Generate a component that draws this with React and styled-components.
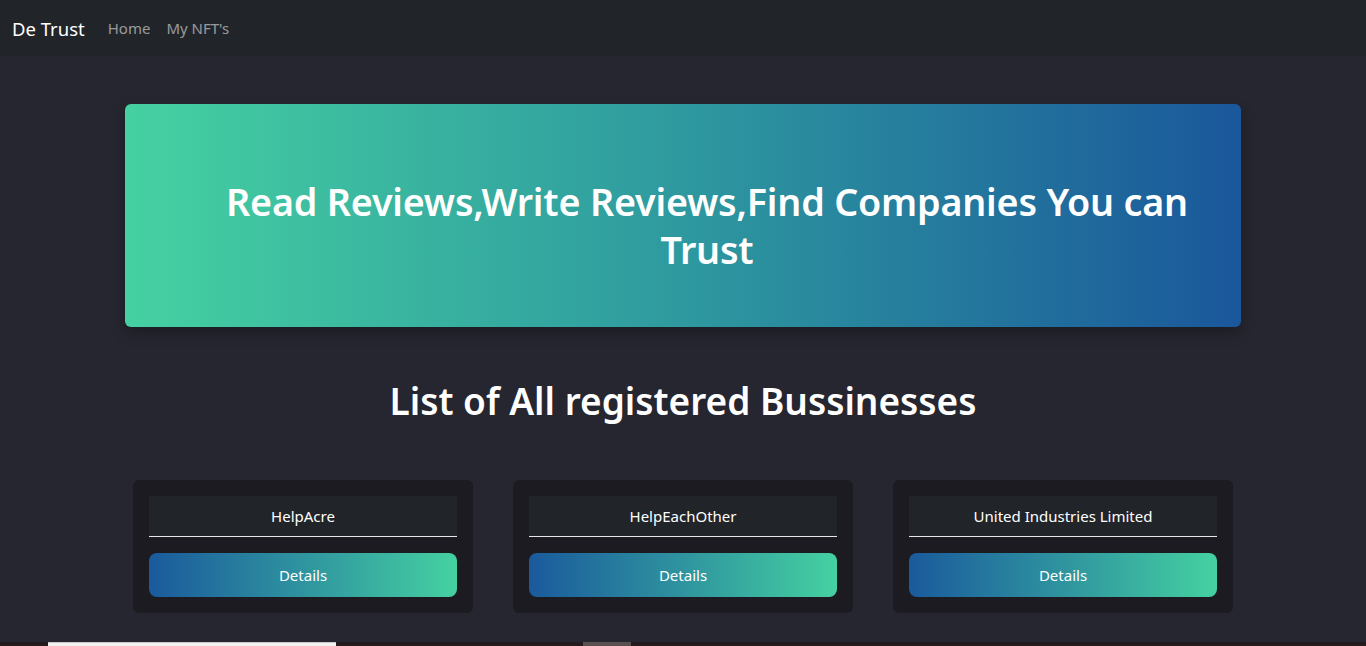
import React from 'react';
import styled, { createGlobalStyle } from 'styled-components';

const GlobalStyle = createGlobalStyle`
  * {
    box-sizing: border-box;
  }
  body {
    margin: 0;
    background: #25262f;
    font-family: "Noto Sans", "Open Sans", sans-serif;
    color: #fff;
  }
`;

const Navbar = styled.nav`
  height: 56px;
  background: #212529;
  display: flex;
  align-items: center;
  padding: 0 12px;
`;

const Brand = styled.a`
  font-size: 18.5px;
  color: #fff;
  margin-right: 15px;
  text-decoration: none;
`;

const NavLink = styled.a`
  font-size: 15px;
  color: rgba(255, 255, 255, 0.55);
  padding: 0 8px;
  text-decoration: none;
`;

const Container = styled.main`
  width: 1140px;
  margin: 0 auto;
  padding: 0 12px;
`;

const Hero = styled.section`
  margin-top: 48px;
  height: 223px;
  border-radius: 6px;
  background: linear-gradient(90deg, #45d1a1 0%, #2e999f 50%, #1a579b 100%);
  box-shadow: 0 6px 14px rgba(0, 0, 0, 0.25);
  display: flex;
  align-items: center;
  justify-content: center;
  padding: 20px 48px 0 96px;
`;

const HeroTitle = styled.h1`
  margin: 0;
  font-size: 37.7px;
  font-weight: 600;
  line-height: 48px;
  text-align: center;
  letter-spacing: -0.2px;
`;

const SectionTitle = styled.h2`
  margin: 50px 0 0;
  font-size: 37px;
  font-weight: 600;
  line-height: 48px;
  text-align: center;
`;

const CardGrid = styled.div`
  margin-top: 55px;
  display: grid;
  grid-template-columns: repeat(3, 340px);
  justify-content: center;
  gap: 40px;
`;

const Card = styled.div`
  background: #1c1b21;
  border-radius: 6px;
  padding: 16px;
  display: flex;
  flex-direction: column;
  gap: 16px;
`;

const CardName = styled.div`
  height: 41px;
  background: #212529;
  border-bottom: 1px solid #e6e6e6;
  display: flex;
  align-items: center;
  justify-content: center;
  font-size: 15px;
`;

const DetailsButton = styled.button`
  height: 44px;
  border: none;
  border-radius: 8px;
  background: linear-gradient(90deg, #1a5a9c 0%, #2f949f 50%, #45d1a1 100%);
  color: #fff;
  font-family: inherit;
  font-size: 15px;
  cursor: pointer;
`;

const BottomStrip = styled.div`
  margin-top: 29px;
  height: 20px;
  background: #221a1d;
  display: flex;
`;

const StripBlock = styled.div`
  width: ${p => p.w}px;
  margin-left: ${p => p.ml}px;
  background: ${p => p.bg};
  border-top: ${p => (p.light ? '1px solid #c8c8c8' : 'none')};
`;

const businesses = ['HelpAcre', 'HelpEachOther', 'United Industries Limited'];

export default function App() {
  return (
    <>
      <GlobalStyle />
      <Navbar>
        <Brand href="#">De Trust</Brand>
        <NavLink href="#">Home</NavLink>
        <NavLink href="#">My NFT's</NavLink>
      </Navbar>
      <Container>
        <Hero>
          <HeroTitle>Read Reviews,Write Reviews,Find Companies You can Trust</HeroTitle>
        </Hero>
        <SectionTitle>List of All registered Bussinesses</SectionTitle>
        <CardGrid>
          {businesses.map(name => (
            <Card key={name}>
              <CardName>{name}</CardName>
              <DetailsButton>Details</DetailsButton>
            </Card>
          ))}
        </CardGrid>
      </Container>
      <BottomStrip>
        <StripBlock w={288} ml={48} bg="#f2f2f2" light />
        <StripBlock w={48} ml={247} bg="#5a5050" />
      </BottomStrip>
    </>
  );
}
